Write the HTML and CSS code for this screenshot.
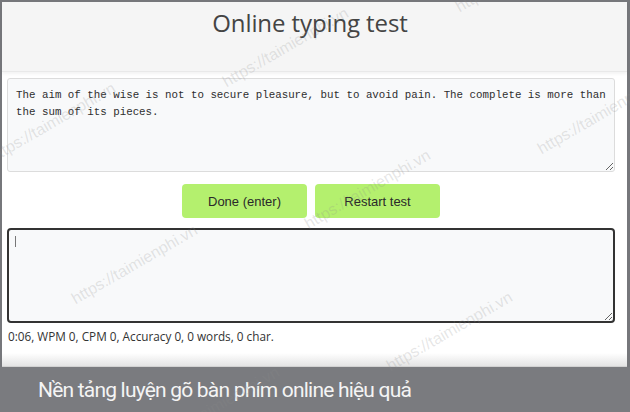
FILE: index.html
```html
<!DOCTYPE html>
<html lang="vi">
<head>
<meta charset="utf-8">
<title>Online typing test</title>
<link rel="stylesheet" href="styles.css">
</head>
<body>
<div class="page">
  <div class="window">
    <header class="header">
      <h1 class="title">Online typing test</h1>
    </header>
    <main class="main">
      <textarea class="source" readonly>The aim of the wise is not to secure pleasure, but to avoid pain. The complete is more than the sum of its pieces.</textarea>
      <div class="actions">
        <button class="btn" type="button">Done (enter)</button>
        <button class="btn" type="button">Restart test</button>
      </div>
      <div class="input-wrap">
        <textarea class="input"></textarea>
        <span class="caret"></span>
      </div>
      <p class="stats">0:06, WPM 0, CPM 0, Accuracy 0, 0 words, 0 char.</p>
    </main>
    <div class="shade"></div>
  </div>
  <div class="caption">Nền tảng luyện gõ bàn phím online hiệu quả</div>

  <div class="watermarks" aria-hidden="true">
    <span class="wm wm1">https://taimienphi.vn</span>
    <span class="wm wm2">https://taimienphi.vn</span>
    <span class="wm wm3">https://taimienphi.vn</span>
    <span class="wm wm4">https://taimienphi.vn</span>
    <span class="wm wm5">https://taimienphi.vn</span>
    <span class="wm wm6">https://taimienphi.vn</span>
    <span class="wm wm7">https://taimienphi.vn</span>
    <span class="wm wm8">https://taimienphi.vn</span>
  </div>
</div>
</body>
</html>
```

FILE: styles.css
```css
* { box-sizing: border-box; }

html, body {
  margin: 0;
  padding: 0;
  background: #fff;
}

.page {
  position: relative;
  width: 630px;
  height: 412px;
  display: flex;
  flex-direction: column;
  overflow: hidden;
}

.window {
  flex: 1;
  display: flex;
  flex-direction: column;
  background: #fff;
  border: 2px solid #76777b;
  border-right-width: 3px;
  border-bottom: 0;
}

.header {
  height: 70px;
  background: #f5f5f5;
  border-bottom: 1px solid #e9e9e9;
  box-shadow: 0 2px 3px rgba(0, 0, 0, 0.05);
  padding-right: 9px;
}

.title {
  margin: 0;
  padding-top: 3px;
  text-align: center;
  font-family: "Open Sans", sans-serif;
  font-weight: 400;
  font-size: 24px;
  letter-spacing: -0.1px;
  line-height: 36px;
  color: #444;
}

.main {
  display: flex;
  flex-direction: column;
  padding: 6px 12px 0 5px;
}

.source {
  display: block;
  width: 100%;
  height: 94px;
  margin: 0;
  padding: 8px 8px;
  background: #f8f9fa;
  border: 1px solid #dcdcdc;
  border-radius: 3px;
  font-family: "Liberation Mono", "DejaVu Sans Mono", monospace;
  font-size: 10.8px;
  line-height: 17px;
  color: #2e2e2e;
  resize: vertical;
  outline: none;
}

.actions {
  display: flex;
  justify-content: center;
  gap: 8px;
  margin-top: 12px;
}

.btn {
  width: 125px;
  height: 34px;
  border: 0;
  border-radius: 4px;
  background: #b4f06e;
  font-family: "Liberation Sans", Arial, sans-serif;
  font-size: 13px;
  color: #2a2a2a;
  padding: 0;
}

.input-wrap {
  position: relative;
  margin-top: 10px;
}

.input {
  display: block;
  width: 100%;
  height: 95px;
  margin: 0;
  padding: 6px 7px;
  background: #f8f9fa;
  border: 2px solid #333;
  border-radius: 4px;
  font-family: "Open Sans", sans-serif;
  font-size: 13px;
  resize: vertical;
  outline: none;
}

.caret {
  position: absolute;
  left: 8px;
  top: 8px;
  width: 1px;
  height: 11px;
  background: #777;
}

.stats {
  margin: 5px 0 0 1px;
  font-family: "Open Sans", sans-serif;
  font-size: 11.75px;
  line-height: 16px;
  color: #333;
}

.shade {
  margin-top: auto;
  height: 14px;
  background: linear-gradient(#ffffff, #e4e4e4);
  border-bottom: 1px solid #d2d2d2;
}

.caption {
  height: 45px;
  flex: none;
  background: #7a7b7f;
  padding-left: 38px;
  padding-top: 1px;
  font-family: Roboto, "Noto Sans", sans-serif;
  font-size: 21px;
  letter-spacing: -0.8px;
  line-height: 44px;
  color: #f4f4f4;
  white-space: nowrap;
}

.watermarks {
  position: absolute;
  inset: 0;
  pointer-events: none;
}

.wm {
  position: absolute;
  font-family: "Liberation Sans", Arial, sans-serif;
  font-size: 16px;
  line-height: 16px;
  color: rgba(140, 140, 140, 0.22);
  white-space: nowrap;
  transform-origin: left bottom;
  transform: rotate(-30deg);
}

.wm1 { left: -5px;  top: 149px; }
.wm2 { left: 228px; top: 74px; }
.wm3 { left: 77px;  top: 291px; }
.wm4 { left: 310px; top: 216px; }
.wm5 { left: 543px; top: 141px; }
.wm6 { left: 392px; top: 358px; }
.wm7 { left: 461px; top: -1px; }
.wm8 { left: 159px; top: 433px; }
```
